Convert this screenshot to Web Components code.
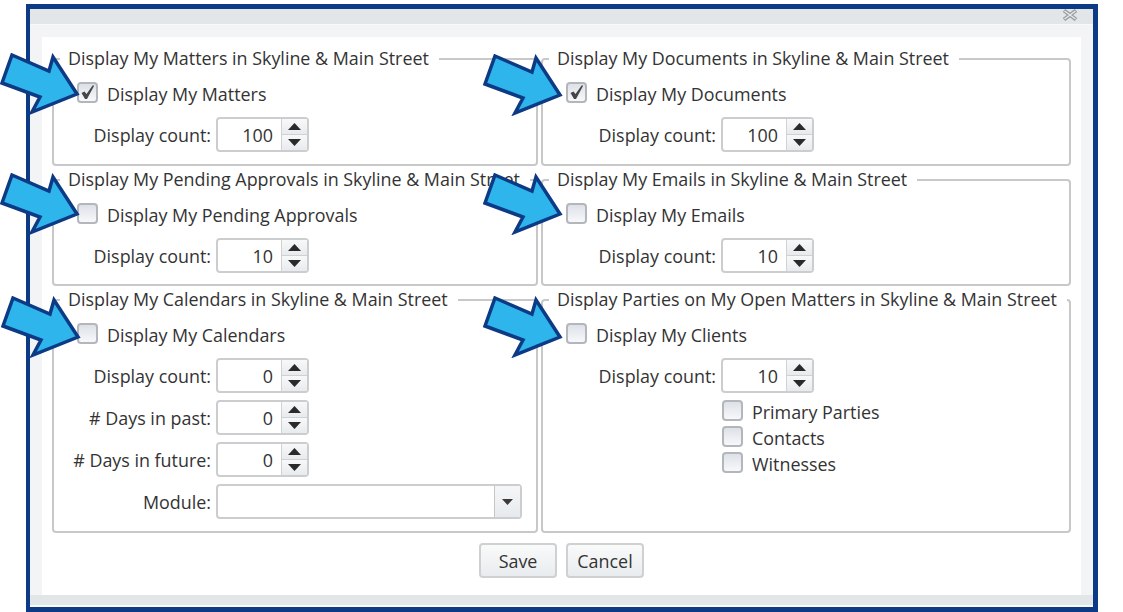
<!DOCTYPE html>
<html>
<head>
<meta charset="utf-8">
<title>Display settings</title>
<style>
    html, body { margin: 0; padding: 0; background: #fff; }
    body { font-family: "Open Sans", "Liberation Sans", sans-serif; font-size: 17.9px; color: #333; overflow: hidden; }
</style>
</head>
<body>
<x-dialog>
    <x-group legend="Display My Matters in Skyline &amp; Main Street" style="--label-w:134px">
        <x-check checked>Display My Matters</x-check>
        <x-field class="first" label="Display count:"><x-spin value="100"></x-spin></x-field>
        <x-arrow style="left:-52px;top:6px"></x-arrow>
    </x-group>
    <x-group legend="Display My Documents in Skyline &amp; Main Street" style="--label-w:150px">
        <x-check checked>Display My Documents</x-check>
        <x-field class="first" label="Display count:"><x-spin value="100"></x-spin></x-field>
        <x-arrow style="left:-58px;top:7px"></x-arrow>
    </x-group>
    <x-group legend="Display My Pending Approvals in Skyline &amp; Main Street" style="--label-w:134px">
        <x-check>Display My Pending Approvals</x-check>
        <x-field class="first" label="Display count:"><x-spin value="10"></x-spin></x-field>
        <x-arrow style="left:-52px;top:5px"></x-arrow>
    </x-group>
    <x-group legend="Display My Emails in Skyline &amp; Main Street" style="--label-w:150px">
        <x-check>Display My Emails</x-check>
        <x-field class="first" label="Display count:"><x-spin value="10"></x-spin></x-field>
        <x-arrow style="left:-58px;top:5px"></x-arrow>
    </x-group>
    <x-group legend="Display My Calendars in Skyline &amp; Main Street" style="--label-w:134px">
        <x-check>Display My Calendars</x-check>
        <x-field class="first" label="Display count:"><x-spin value="0"></x-spin></x-field>
        <x-field label="# Days in past:"><x-spin value="0"></x-spin></x-field>
        <x-field label="# Days in future:"><x-spin value="0"></x-spin></x-field>
        <x-field label="Module:"><x-select></x-select></x-field>
        <x-arrow style="left:-51px;top:8px"></x-arrow>
    </x-group>
    <x-group legend="Display Parties on My Open Matters in Skyline &amp; Main Street" style="--label-w:150px">
        <x-check>Display My Clients</x-check>
        <x-field class="first" label="Display count:"><x-spin value="10"></x-spin></x-field>
        <x-sublist>
            <x-check>Primary Parties</x-check>
            <x-check>Contacts</x-check>
            <x-check>Witnesses</x-check>
        </x-sublist>
        <x-arrow style="left:-58px;top:8px"></x-arrow>
    </x-group>
    <x-btn slot="actions">Save</x-btn>
    <x-btn slot="actions">Cancel</x-btn>
</x-dialog>

<script>
    class XDialog extends HTMLElement {
        constructor() {
            super();
            this.attachShadow({ mode: 'open' });
            this.shadowRoot.innerHTML = `
                <style>
                    :host {
                        display: block;
                        box-sizing: border-box;
                        width: 1072px;
                        height: 608px;
                        margin: 4px 0 0 26px;
                        border: solid #0c3a85;
                        border-width: 5px 5px 5px 4px;
                        background: #f3f4f6;
                        filter: blur(0.4px);
                    }
                    .title {
                        height: 15px;
                        background: #e3e6e8;
                        border-bottom: 1px solid #f8f9f9;
                        display: flex;
                        justify-content: flex-end;
                        padding-right: 15px;
                    }
                    .panel {
                        height: 558px;
                        box-sizing: border-box;
                        margin: 12px 12px 0;
                        background: #fff;
                        padding: 10px 10px 0;
                    }
                    .grid {
                        display: grid;
                        grid-template-columns: 486px 530px;
                        grid-template-rows: 119px 118px 245px;
                        column-gap: 3px;
                        row-gap: 2px;
                    }
                    .actions {
                        display: flex;
                        justify-content: center;
                        gap: 9px;
                        margin-top: 10px;
                    }
                    .foot {
                        height: 10px;
                        background: #e3e6e8;
                        border-bottom: 2px solid #f8f9f9;
                    }
                </style>
                <div class="title">
                    <svg width="16" height="12" viewBox="0 0 16 12">
                        <path d="M2 1.5 L14 10.5 M14 1.5 L2 10.5" stroke="#9b9d9f" stroke-width="4" fill="none"/>
                        <path d="M2.5 2 L13.5 10 M13.5 2 L2.5 10" stroke="#e6e7e8" stroke-width="1.5" fill="none"/>
                    </svg>
                </div>
                <div class="panel">
                    <div class="grid"><slot></slot></div>
                    <div class="actions"><slot name="actions"></slot></div>
                </div>
                <div class="foot"></div>
            `;
        }
    }

    class XGroup extends HTMLElement {
        constructor() {
            super();
            this.attachShadow({ mode: 'open' });
            this.shadowRoot.innerHTML = `
                <style>
                    :host { display: block; position: relative; }
                    fieldset {
                        box-sizing: border-box;
                        height: 100%;
                        margin: 0;
                        padding: 0;
                        min-width: 0;
                        border: 2px solid #c8c8c8;
                        border-radius: 4px;
                    }
                    legend {
                        margin-left: 6px;
                        padding: 0 10px 0 8px;
                        height: 24px;
                        line-height: 23px;
                        white-space: nowrap;
                    }
                    .body { padding: 10px 15px 0 23px; }
                </style>
                <fieldset>
                    <legend></legend>
                    <div class="body"><slot></slot></div>
                </fieldset>
            `;
            this.shadowRoot.querySelector('legend').textContent = this.getAttribute('legend');
        }
    }

    class XCheck extends HTMLElement {
        constructor() {
            super();
            this.attachShadow({ mode: 'open' });
            this.shadowRoot.innerHTML = `
                <style>
                    :host { display: flex; align-items: center; gap: 9px; height: 22px; }
                    .box {
                        box-sizing: border-box;
                        width: 21px;
                        height: 21px;
                        border: 2px solid #b3b7bc;
                        border-radius: 4px;
                        background: linear-gradient(#dde1e8, #f7f8fa);
                        display: flex;
                        align-items: center;
                        justify-content: center;
                    }
                    .text { padding-top: 3px; }
                </style>
                <span class="box"></span>
                <span class="text"><slot></slot></span>
            `;
            if (this.hasAttribute('checked')) {
                this.shadowRoot.querySelector('.box').innerHTML = `
                    <svg width="17" height="17" viewBox="0 0 17 17">
                        <path d="M2.5 9 L5.5 7.5 L7.5 10 L14 1 L15 2 L8 15 L6 15 Z" fill="#454545"/>
                    </svg>`;
            }
        }
    }

    class XField extends HTMLElement {
        constructor() {
            super();
            this.attachShadow({ mode: 'open' });
            this.shadowRoot.innerHTML = `
                <style>
                    :host {
                        display: grid;
                        grid-template-columns: var(--label-w) 1fr;
                        column-gap: 5px;
                        align-items: center;
                        margin-top: 7px;
                    }
                    :host(.first) { margin-top: 14px; }
                    .label { justify-self: end; white-space: nowrap; padding-top: 1px; }
                </style>
                <span class="label"></span>
                <div><slot></slot></div>
            `;
            this.shadowRoot.querySelector('.label').textContent = this.getAttribute('label');
        }
    }

    class XSpin extends HTMLElement {
        constructor() {
            super();
            this.attachShadow({ mode: 'open' });
            this.shadowRoot.innerHTML = `
                <style>
                    :host {
                        display: flex;
                        box-sizing: border-box;
                        width: 93px;
                        height: 35px;
                        border: 2px solid #cccdcf;
                        border-radius: 4px;
                        background: #fff;
                    }
                    .value { flex: 1; text-align: right; padding-right: 8px; line-height: 33px; }
                    .btns { width: 25px; display: flex; flex-direction: column; border-left: 1px solid #d0d2d4; }
                    .btn {
                        flex: 1;
                        display: flex;
                        align-items: center;
                        justify-content: center;
                        background: linear-gradient(#f7f8f9, #e8ebee);
                    }
                    .btn + .btn { border-top: 1px solid #cfd1d3; }
                </style>
                <span class="value"></span>
                <div class="btns">
                    <div class="btn"><svg width="13" height="7" viewBox="0 0 13 7"><path d="M6.5 0 L13 7 H0 Z" fill="#2a2a2a"/></svg></div>
                    <div class="btn"><svg width="13" height="7" viewBox="0 0 13 7"><path d="M0 0 H13 L6.5 7 Z" fill="#2a2a2a"/></svg></div>
                </div>
            `;
            this.shadowRoot.querySelector('.value').textContent = this.getAttribute('value');
        }
    }

    class XSelect extends HTMLElement {
        constructor() {
            super();
            this.attachShadow({ mode: 'open' });
            this.shadowRoot.innerHTML = `
                <style>
                    :host {
                        display: flex;
                        box-sizing: border-box;
                        width: 306px;
                        height: 35px;
                        border: 2px solid #cccdcf;
                        border-radius: 4px;
                        background: #fff;
                    }
                    .text { flex: 1; }
                    .drop {
                        width: 25px;
                        border-left: 1px solid #c4c6c8;
                        display: flex;
                        align-items: center;
                        justify-content: center;
                        background: linear-gradient(#f5f6f7, #e7eaed);
                    }
                </style>
                <span class="text"></span>
                <div class="drop"><svg width="11" height="6" viewBox="0 0 11 6"><path d="M0 0 H11 L5.5 6 Z" fill="#3a3a3a"/></svg></div>
            `;
        }
    }

    class XSublist extends HTMLElement {
        constructor() {
            super();
            this.attachShadow({ mode: 'open' });
            this.shadowRoot.innerHTML = `
                <style>
                    :host {
                        display: grid;
                        grid-auto-rows: 26px;
                        align-items: center;
                        margin: 4px 0 0 156px;
                    }
                </style>
                <slot></slot>
            `;
        }
    }

    class XBtn extends HTMLElement {
        constructor() {
            super();
            this.attachShadow({ mode: 'open' });
            this.shadowRoot.innerHTML = `
                <style>
                    :host {
                        display: flex;
                        align-items: center;
                        justify-content: center;
                        box-sizing: border-box;
                        width: 78px;
                        height: 35px;
                        border: 2px solid #cfd0d2;
                        border-radius: 4px;
                        background: linear-gradient(#f9fafa, #e9ecee);
                    }
                </style>
                <slot></slot>
            `;
        }
    }

    class XArrow extends HTMLElement {
        constructor() {
            super();
            this.attachShadow({ mode: 'open' });
            this.shadowRoot.innerHTML = `
                <style>
                    :host { position: absolute; display: block; width: 80px; height: 62px; }
                    svg { display: block; }
                </style>
                <svg width="80" height="62" viewBox="0 0 80 62">
                    <path d="M12 2 L49 18 L53 4 L77 41 L32 59 L40 44 L2 30 Z" fill="#2eb6ec" stroke="#0c3a85" stroke-width="3.5"/>
                </svg>
            `;
        }
    }

    customElements.define('x-dialog', XDialog);
    customElements.define('x-group', XGroup);
    customElements.define('x-check', XCheck);
    customElements.define('x-field', XField);
    customElements.define('x-spin', XSpin);
    customElements.define('x-select', XSelect);
    customElements.define('x-sublist', XSublist);
    customElements.define('x-btn', XBtn);
    customElements.define('x-arrow', XArrow);
</script>
</body>
</html>
